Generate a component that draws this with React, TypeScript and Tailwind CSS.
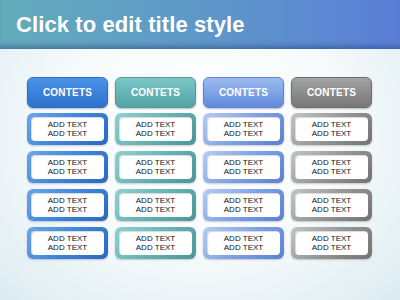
import React from "react";

const cols = [
  {
    head: "bg-[linear-gradient(180deg,#4b93e6_0%,#3a82dc_50%,#2f71c9_100%)] border-[#2e6cbf]",
    ring: "bg-[linear-gradient(135deg,#6aa6ec_0%,#3f86da_50%,#2a68bf_100%)]",
  },
  {
    head: "bg-[linear-gradient(180deg,#7cc6c6_0%,#66b5b6_50%,#55a2a3_100%)] border-[#4f9a9b]",
    ring: "bg-[linear-gradient(135deg,#8fd2d2_0%,#66b3b4_50%,#4a9596_100%)]",
  },
  {
    head: "bg-[linear-gradient(180deg,#9dbbf0_0%,#7ea3e8_50%,#6389db_100%)] border-[#5d82d2]",
    ring: "bg-[linear-gradient(135deg,#b6cdf3_0%,#7fa2e6_50%,#5a7fd1_100%)]",
  },
  {
    head: "bg-[linear-gradient(180deg,#a3a3a3_0%,#8c8c8c_50%,#777777_100%)] border-[#6f6f6f]",
    ring: "bg-[linear-gradient(135deg,#c4c4c4_0%,#969696_50%,#727272_100%)]",
  },
];

export default function App() {
  return (
    <div
      className="w-[400px] h-[300px] overflow-hidden flex flex-col bg-[radial-gradient(ellipse_at_50%_45%,#ffffff_0%,#f7fbfc_50%,#dcebf1_100%)]"
      style={{ fontFamily: '"Liberation Sans", Arial, sans-serif' }}
    >
      <div className="h-[49px] shrink-0 flex items-center pl-[16px] bg-[linear-gradient(90deg,#63abba_0%,#5f98c8_50%,#5a7ed7_100%)] shadow-[inset_0_-6px_5px_-3px_rgba(30,60,110,0.45)]">
        <span className="text-white font-bold text-[22px] leading-none tracking-[0.1px]">
          Click to edit title style
        </span>
      </div>
      <div className="pl-[27px] pt-[28px] grid grid-cols-[repeat(4,81px)] gap-x-[7px]">
        {cols.map((c, i) => (
          <div key={i} className="flex flex-col">
            <div
              className={`h-[31px] rounded-[6px] border flex items-center justify-center shadow-[0_1px_2px_rgba(0,0,0,0.25)] ${c.head}`}
            >
              <span className="text-white font-bold text-[10px] tracking-[0.2px]">CONTETS</span>
            </div>
            <div className="flex flex-col gap-[6px] mt-[5px]">
              {[0, 1, 2, 3].map((r) => (
                <div
                  key={r}
                  className={`h-[32px] rounded-[6px] p-[4px] shadow-[0_1px_2px_rgba(0,0,0,0.2)] ${c.ring}`}
                >
                  <div className="h-full rounded-[4px] bg-white flex flex-col items-center justify-center text-[8px] leading-[9px] text-[#111111] shadow-[inset_1px_1px_1px_rgba(0,0,0,0.15)]">
                    <span>ADD TEXT</span>
                    <span>ADD TEXT</span>
                  </div>
                </div>
              ))}
            </div>
          </div>
        ))}
      </div>
    </div>
  );
}
